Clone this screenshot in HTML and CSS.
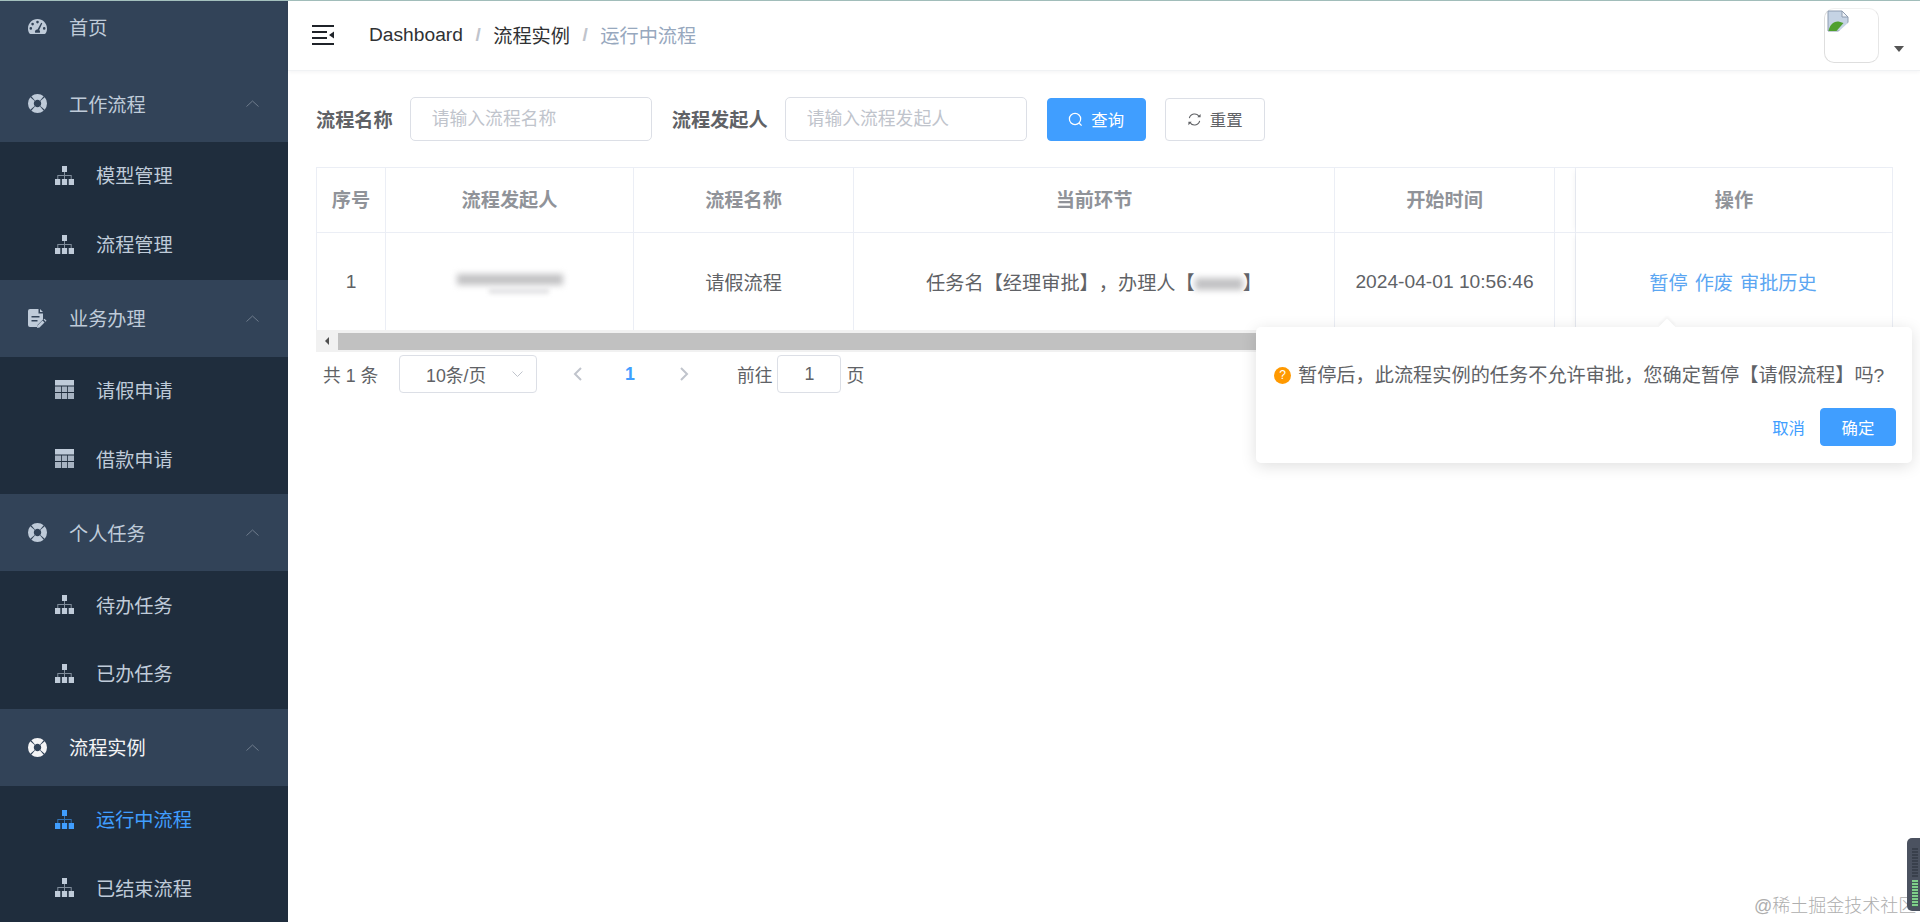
FILE: index.html
```html
<!DOCTYPE html>
<html>
<head>
  <title>运行中流程</title>
  <meta charset="utf-8">
  <link rel="stylesheet" href="styles.css">
</head>
<body>
  <svg class="icon-defs" width="0" height="0">
    <symbol id="i-gauge" viewBox="0 0 19 19">
      <path fill-rule="evenodd" d="M9.5 2C4.3 2 0 6.2 0 11.4c0 1.9.5 3.600 1.500 5.100.2.300.5.500.9.500h14.200c.4 0 .7-.2.900-.5 1-1.500 1.500-3.200 1.500-5.100C19 6.200 14.700 2 9.500 2zM9.500 3.800a1.300 1.300 0 1 1 0 2.600 1.300 1.300 0 0 1 0-2.600zM4.600 5.800a1.300 1.300 0 1 1 0 2.600 1.300 1.300 0 0 1 0-2.600zM2.800 10.100a1.300 1.300 0 1 1 0 2.600 1.300 1.300 0 0 1 0-2.600zM16.200 10.100a1.300 1.300 0 1 1 0 2.600 1.300 1.300 0 0 1 0-2.600zM13.200 5.700l1.100.5-3.100 6.700c.6.500.9 1.100.9 1.800 0 .4-.1.800-.3 1.100H7.200a2.300 2.300 0 0 1 2.300-3.400z"/>
    </symbol>
    <symbol id="i-ring" viewBox="0 0 19 19">
      <circle cx="9.500" cy="9.500" r="6.600" fill="none" stroke="currentColor" stroke-width="5.800" pathLength="100" stroke-dasharray="22.500 2.500" stroke-dashoffset="11.250"/>
    </symbol>
    <symbol id="i-doc" viewBox="0 0 19 19">
      <path fill-rule="evenodd" d="M2 0h8.500v4.500H15v6l-5.500 5.500v2H2a2 2 0 0 1-2-2V2a2 2 0 0 1 2-2zM3.500 7v1.600h8V7zM3.500 11v1.600h6V11zM12 0l3 3h-3z"/>
      <path d="M14.500 11.500l2 2-5 5-2.500.5.500-2.500z M15.500 10.500l1-.8 2 2-.8 1z"/>
    </symbol>
    <symbol id="i-sitemap" viewBox="0 0 19 19">
      <path d="M7 0h5v6H7zM0 13h5.300v6H0zM6.900 13h5.200v6H6.900zM13.700 13H19v6h-5.300z"/>
      <path opacity=".6" d="M9 6h1v3h6.700v4h-1v-3H10v3H9v-3H3.300v3h-1V9H9z"/>
    </symbol>
    <symbol id="i-table" viewBox="0 0 19 19">
      <path d="M0 0h19v5.500H0z"/>
      <path opacity=".85" d="M0 6.500h6v5.500H0zM6.800 6.500h5.400v5.500H6.800zM13 6.500h6v5.500h-6zM0 13h6v6H0zM6.800 13h5.400v6H6.800zM13 13h6v6h-6z"/>
    </symbol>
    <symbol id="i-up" viewBox="0 0 13 7">
      <path d="M.5 6.500l6-5.500 6 5.500" fill="none" stroke="currentColor" stroke-width="1"/>
    </symbol>
  </svg>

  <div class="app">
    <div class="sidebar">
      <ul class="menu">
        <li class="menu-title">
          <svg class="menu-icon"><use href="#i-gauge"/></svg><span>首页</span>
        </li>
        <li class="menu-title">
          <svg class="menu-icon"><use href="#i-ring"/></svg><span>工作流程</span>
          <svg class="menu-arrow"><use href="#i-up"/></svg>
        </li>
        <li class="submenu">
          <div class="submenu-item"><svg class="menu-icon"><use href="#i-sitemap"/></svg><span>模型管理</span></div>
          <div class="submenu-item"><svg class="menu-icon"><use href="#i-sitemap"/></svg><span>流程管理</span></div>
        </li>
        <li class="menu-title">
          <svg class="menu-icon"><use href="#i-doc"/></svg><span>业务办理</span>
          <svg class="menu-arrow"><use href="#i-up"/></svg>
        </li>
        <li class="submenu">
          <div class="submenu-item"><svg class="menu-icon"><use href="#i-table"/></svg><span>请假申请</span></div>
          <div class="submenu-item"><svg class="menu-icon"><use href="#i-table"/></svg><span>借款申请</span></div>
        </li>
        <li class="menu-title">
          <svg class="menu-icon"><use href="#i-ring"/></svg><span>个人任务</span>
          <svg class="menu-arrow"><use href="#i-up"/></svg>
        </li>
        <li class="submenu">
          <div class="submenu-item"><svg class="menu-icon"><use href="#i-sitemap"/></svg><span>待办任务</span></div>
          <div class="submenu-item"><svg class="menu-icon"><use href="#i-sitemap"/></svg><span>已办任务</span></div>
        </li>
        <li class="menu-title open">
          <svg class="menu-icon"><use href="#i-ring"/></svg><span>流程实例</span>
          <svg class="menu-arrow"><use href="#i-up"/></svg>
        </li>
        <li class="submenu">
          <div class="submenu-item active"><svg class="menu-icon"><use href="#i-sitemap"/></svg><span>运行中流程</span></div>
          <div class="submenu-item"><svg class="menu-icon"><use href="#i-sitemap"/></svg><span>已结束流程</span></div>
        </li>
      </ul>
    </div>

    <div class="main">
      <div class="navbar">
        <svg class="hamburger" viewBox="0 0 22 20">
          <path d="M0 0h22v2H0zM0 6h15v2H0zM0 12h15v2H0zM0 18h22v2H0zM22 6.500v7L17 10z"/>
        </svg>
        <div class="breadcrumb">
          <span class="crumb">Dashboard</span>
          <span class="crumb-sep">/</span>
          <span class="crumb">流程实例</span>
          <span class="crumb-sep">/</span>
          <span class="crumb current">运行中流程</span>
        </div>
        <div class="avatar">
          <svg class="broken-img" viewBox="0 0 22 22">
            <path d="M1 1h14l6 6v14H1z" fill="#c5d3e4" stroke="#8e9cb0"/>
            <path d="M15 1v6h6z" fill="#eef2f7" stroke="#8e9cb0"/>
            <path d="M1.500 21c1-6 5-10 10-9.500l5 1.500-7 8z" fill="#4fa02f"/>
            <path d="M11 22L22 12v10z" fill="#fff"/>
          </svg>
        </div>
        <span class="caret"></span>
      </div>

      <div class="content">
        <div class="search-form">
          <label class="form-label">流程名称</label>
          <input class="form-input" type="text" placeholder="请输入流程名称">
          <label class="form-label">流程发起人</label>
          <input class="form-input" type="text" placeholder="请输入流程发起人">
          <button class="btn primary">
            <svg class="btn-icon" viewBox="0 0 16 16"><circle cx="7.500" cy="7.500" r="6" fill="none" stroke="currentColor" stroke-width="1.300"/><path d="M12 12l2.500 2.500" stroke="currentColor" stroke-width="1.300"/></svg>
            查询
          </button>
          <button class="btn">
            <svg class="btn-icon" viewBox="0 0 16 16"><path d="M2.500 6.500A5.700 5.700 0 0 1 13 5M13.500 9.500A5.700 5.700 0 0 1 3 11" fill="none" stroke="currentColor" stroke-width="1.200"/><path d="M11 5.500h3.500V2zM5 10.500H1.500V14z" fill="currentColor"/></svg>
            重置
          </button>
        </div>

        <div class="table-wrap">
          <table class="data-table">
            <colgroup>
              <col class="col-no">
              <col class="col-user">
              <col class="col-name">
              <col class="col-node">
              <col class="col-time">
              <col class="col-gap">
              <col class="col-ops">
            </colgroup>
            <thead>
              <tr>
                <th>序号</th>
                <th>流程发起人</th>
                <th>流程名称</th>
                <th>当前环节</th>
                <th>开始时间</th>
                <th></th>
                <th class="fixed-cell">操作</th>
              </tr>
            </thead>
            <tbody>
              <tr>
                <td>1</td>
                <td>
                  <div class="blur-user"><i></i><b></b></div>
                </td>
                <td>请假流程</td>
                <td>任务名【经理审批】，办理人【<i class="blur-name"></i>】</td>
                <td>2024-04-01 10:56:46</td>
                <td></td>
                <td class="fixed-cell">
                  <div class="row-ops">
                    <a>暂停</a>
                    <a>作废</a>
                    <a>审批历史</a>
                  </div>
                </td>
              </tr>
            </tbody>
          </table>
          <div class="h-scroll">
            <span class="h-scroll-arrow"></span>
            <div class="h-scroll-thumb"></div>
          </div>
        </div>

        <div class="pagination">
          <span class="total">共 1 条</span>
          <div class="page-size">
            <span>10条/页</span>
            <svg class="page-size-arrow" viewBox="0 0 11 6"><path d="M.5.500l5 5 5-5" fill="none" stroke="currentColor"/></svg>
          </div>
          <svg class="page-nav" viewBox="0 0 9 14"><path d="M8 1L2 7l6 6" fill="none" stroke="currentColor" stroke-width="2"/></svg>
          <span class="page-num">1</span>
          <svg class="page-nav" viewBox="0 0 9 14"><path d="M1 1l6 6-6 6" fill="none" stroke="currentColor" stroke-width="2"/></svg>
          <span class="goto-label">前往</span>
          <div class="goto-input">1</div>
          <span class="goto-unit">页</span>
        </div>
      </div>
    </div>
  </div>

  <!-- popconfirm opened from the pause link -->
  <div class="popconfirm">
    <span class="popconfirm-arrow"></span>
    <div class="popconfirm-msg">
      <span class="warn-icon">?</span>
      <span>暂停后，此流程实例的任务不允许审批，您确定暂停【请假流程】吗?</span>
    </div>
    <div class="popconfirm-actions">
      <a>取消</a>
      <button class="btn primary small">确定</button>
    </div>
  </div>

  <div class="watermark">@稀土掘金技术社区</div>
  <div class="meter-widget">
    <div class="meter-off"></div>
    <div class="meter-on"></div>
  </div>
</body>
</html>
```

FILE: styles.css
```css
* {
  box-sizing: border-box;
}

body {
  margin: 0;
  height: 922px;
  overflow: hidden;
  position: relative;
  background-color: #fff;
  font-family: "Liberation Sans", "Noto Sans CJK SC", sans-serif;
  font-size: 19.2px;
  color: #606266;
  text-spacing-trim: space-all;
}

.icon-defs {
  position: absolute;
}

.app {
  display: flex;
  height: 922px;
  border-top: 1px solid #a3c0bd;
}

/* sidebar */
.sidebar {
  width: 288px;
  flex-shrink: 0;
  overflow: hidden;
  background-color: #1f2d3d;
}

.menu {
  list-style: none;
  margin: -13px 0 0;
  padding: 0;
  color: #bfcbd9;
}

.menu-title {
  display: flex;
  align-items: center;
  height: 77px;
  padding-left: 28px;
  background-color: #324358;
}

.menu-title.open {
  color: #f4f4f5;
}

.menu-icon {
  width: 19px;
  height: 19px;
  flex-shrink: 0;
  margin-right: 22px;
  fill: currentColor;
}

.menu-arrow {
  width: 13px;
  height: 7px;
  margin-left: auto;
  margin-right: 29px;
  color: #6f7c8c;
}

.submenu-item {
  display: flex;
  align-items: center;
  height: 68.800px;
  padding-left: 55px;
  padding-bottom: 2px;
}

.submenu-item.active {
  color: #409eff;
}

/* top bar */
.main {
  flex: 1;
  min-width: 0;
}

.navbar {
  display: flex;
  align-items: center;
  height: 70px;
  padding-left: 24px;
  padding-bottom: 2px;
  border-bottom: 1px solid #f0f2f4;
  box-shadow: 0 1px 4px rgba(0, 21, 41, 0.05);
}

.hamburger {
  width: 22px;
  height: 20px;
  margin-right: 35px;
  fill: #1f2329;
}

.breadcrumb {
  display: flex;
  align-items: center;
  gap: 12.500px;
  color: #303133;
}

.crumb-sep {
  color: #c0c4cc;
  font-weight: bold;
  font-size: 19.200px;
}

.crumb.current {
  color: #97a8be;
}

.avatar {
  width: 55px;
  height: 55px;
  margin-left: auto;
  margin-top: 1px;
  padding: 1px 2px;
  border: 1px solid #dedede;
  border-top-color: #f0f0f0;
  border-right-color: #e6e6e6;
  border-radius: 10px;
}

.broken-img {
  display: block;
  width: 22px;
  height: 22px;
}

.caret {
  width: 0;
  height: 0;
  margin: 28px 16px 0 15px;
  border-top: 6px solid #555;
  border-left: 5.500px solid transparent;
  border-right: 5.500px solid transparent;
}

/* search form */
.content {
  padding: 26px 27px 0 28px;
}

.search-form {
  display: flex;
  align-items: center;
  height: 44px;
  margin-bottom: 26px;
}

.form-label {
  margin-right: 17px;
  font-weight: bold;
}

.form-input {
  width: 242px;
  height: 44px;
  margin-right: 20px;
  padding: 0 21px;
  border: 1px solid #dcdfe6;
  border-radius: 5px;
  outline: none;
  font-family: inherit;
  font-size: 17.800px;
}

.form-input::placeholder {
  color: #c0c4cc;
}

.btn {
  display: flex;
  align-items: center;
  justify-content: center;
  gap: 8px;
  width: 100px;
  height: 43px;
  margin-right: 19px;
  padding: 0;
  background-color: #fff;
  border: 1px solid #dcdfe6;
  border-radius: 4px;
  color: #606266;
  font-family: inherit;
  font-size: 16.400px;
}

.btn.primary {
  width: 99px;
  background-color: #409eff;
  border-color: #409eff;
  color: #fff;
}

.btn.small {
  width: 76px;
  height: 38px;
  margin-right: 0;
}

.btn-icon {
  width: 15px;
  height: 15px;
}

/* table */
.table-wrap {
  width: 1576px;
}

.data-table {
  width: 100%;
  table-layout: fixed;
  border-collapse: separate;
  border-spacing: 0;
  border-top: 1px solid #ebeef5;
  border-left: 1px solid #ebeef5;
}

.col-no { width: 69px; }
.col-user { width: 248px; }
.col-name { width: 220px; }
.col-node { width: 481px; }
.col-time { width: 220px; }
.col-gap { width: 21px; }
.col-ops { width: 317px; }

.data-table th,
.data-table td {
  padding: 0;
  text-align: center;
  border-right: 1px solid #ebeef5;
  font-weight: normal;
  white-space: nowrap;
}

.data-table th {
  height: 65px;
  padding-bottom: 2px;
  border-bottom: 1px solid #ebeef5;
  color: #909399;
  font-weight: bold;
}

.data-table td {
  height: 97px;
}

.data-table .fixed-cell {
  box-shadow: -4px 0 6px -3px rgba(0, 0, 0, 0.05);
}

.blur-user {
  display: flex;
  flex-direction: column;
  align-items: center;
}

.blur-user i {
  display: block;
  width: 106px;
  height: 11px;
  margin-top: 4px;
  background-color: #c2c2c4;
  filter: blur(3px);
}

.blur-user b {
  display: block;
  width: 60px;
  height: 6px;
  margin: 3px 0 0 18px;
  background-color: #e4e4e6;
  filter: blur(2px);
}

.blur-name {
  display: inline-block;
  width: 48px;
  height: 12px;
  background-color: #c2c2c4;
  filter: blur(3px);
}

.row-ops {
  display: flex;
  justify-content: center;
  gap: 7px;
  padding-right: 2px;
  color: #5ba6f2;
}

.h-scroll {
  display: flex;
  align-items: center;
  height: 22px;
  background-color: #f1f1f1;
}

.h-scroll-arrow {
  width: 0;
  height: 0;
  margin: 0 9px 0 9px;
  border-right: 4px solid #505050;
  border-top: 4px solid transparent;
  border-bottom: 4px solid transparent;
}

.h-scroll-thumb {
  flex: 1;
  height: 17px;
  background-color: #c1c1c1;
}

/* pagination */
.pagination {
  display: flex;
  align-items: center;
  height: 38px;
  margin-top: 3px;
  padding-left: 7px;
  font-size: 17.800px;
}

.total {
  width: 76px;
}

.page-size {
  display: flex;
  align-items: center;
  width: 138px;
  height: 38px;
  padding: 0 13px 0 26px;
  border: 1px solid #dcdfe6;
  border-radius: 4px;
}

.page-size-arrow {
  width: 11px;
  height: 6px;
  margin-left: auto;
  color: #c0c4cc;
}

.page-nav {
  width: 9px;
  height: 14px;
  margin-left: 36px;
  color: #c0c4cc;
}

.page-num {
  margin-left: 43px;
  margin-right: 7px;
  color: #409eff;
  font-weight: bold;
}

.page-nav + .page-num + .page-nav {
  margin-left: 38px;
}

.goto-label {
  margin-left: 48px;
}

.goto-input {
  width: 64px;
  height: 38px;
  margin-left: 5px;
  line-height: 36px;
  text-align: center;
  border: 1px solid #dcdfe6;
  border-radius: 4px;
}

.goto-unit {
  margin-left: 5px;
}

/* popconfirm */
.popconfirm {
  position: absolute;
  left: 1256px;
  top: 327px;
  width: 656px;
  height: 136px;
  padding: 33px 16px 0 18px;
  background-color: #fff;
  border-radius: 5px;
  box-shadow: 0 3px 16px rgba(0, 0, 0, 0.13);
}

.popconfirm-arrow {
  position: absolute;
  left: 405px;
  top: -6px;
  width: 12px;
  height: 12px;
  background-color: #fff;
  transform: rotate(45deg);
  box-shadow: -2px -2px 3px rgba(0, 0, 0, 0.04);
}

.popconfirm-msg {
  display: flex;
  align-items: center;
  gap: 7px;
  height: 28px;
  white-space: nowrap;
}

.warn-icon {
  width: 17px;
  height: 17px;
  flex-shrink: 0;
  margin-top: 3px;
  background-color: #f90;
  border-radius: 50%;
  color: #fff;
  font-size: 12px;
  line-height: 17px;
  text-align: center;
}

.popconfirm-actions {
  display: flex;
  align-items: center;
  justify-content: flex-end;
  gap: 15px;
  margin-top: 20px;
  color: #409eff;
  font-size: 16.400px;
}

/* bottom right overlay */
.watermark {
  position: absolute;
  left: 1754px;
  top: 891px;
  font-size: 18px;
  line-height: 30px;
  font-weight: 300;
  color: #aeaeae;
  white-space: nowrap;
}

.meter-widget {
  position: absolute;
  left: 1907px;
  top: 838px;
  width: 13px;
  height: 73px;
  padding: 10px 2px 0 5px;
  background-color: #4b5260;
  border-radius: 5px 0 0 5px;
}

.meter-off {
  height: 29px;
  background: repeating-linear-gradient(#39404c 0 2px, #4b5260 2px 3px);
}

.meter-on {
  height: 27px;
  margin-top: 3px;
  background: repeating-linear-gradient(#7fd08a 0 2px, #3f5f55 2px 3px);
}
```
